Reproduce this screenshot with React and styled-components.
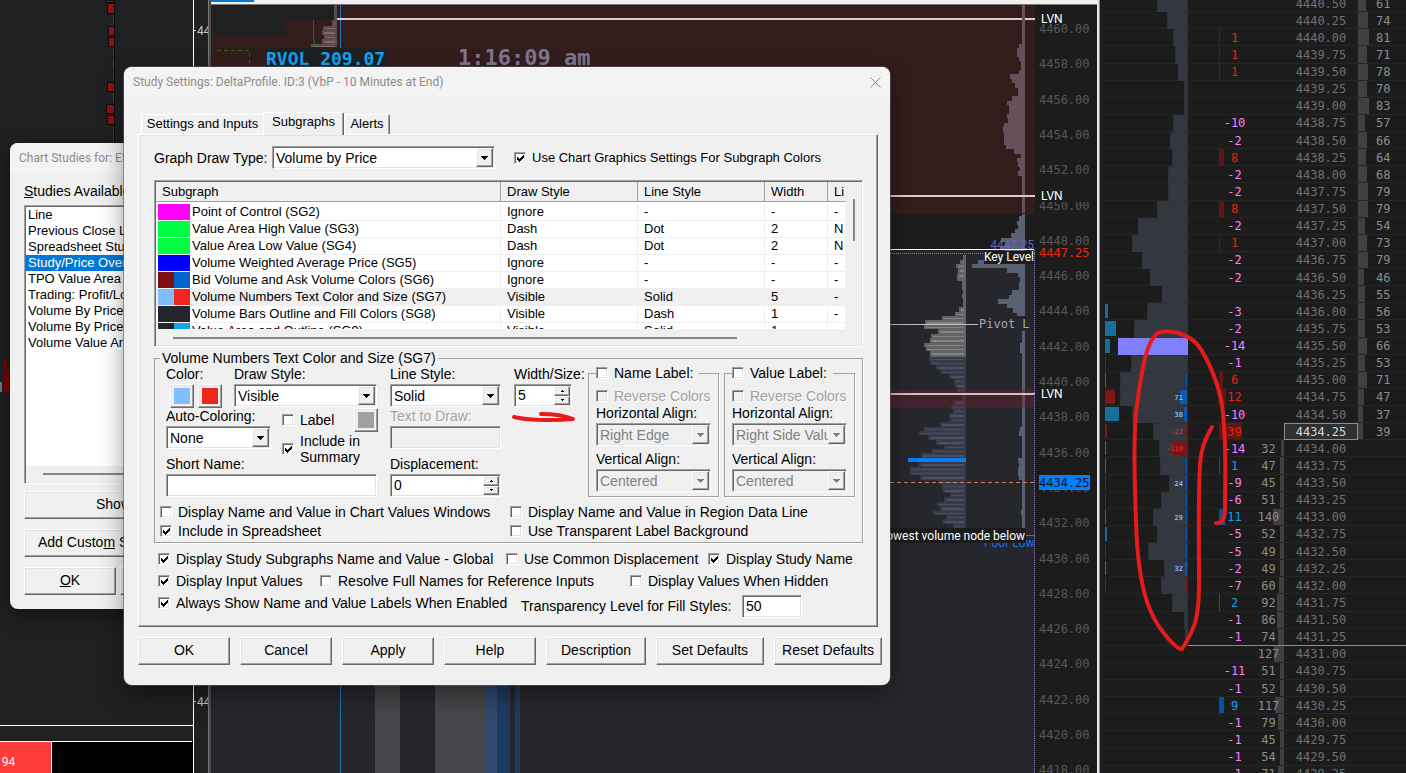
import React from 'react';
import styled, { createGlobalStyle, css } from 'styled-components';

const SANS = '"Liberation Sans", Arial, sans-serif';
const UI = 'Roboto, "Segoe UI", sans-serif';
const MONO = '"DejaVu Sans Mono", Consolas, monospace';

const sunken = css`
  border: 1px solid;
  border-color: #a0a0a0 #fff #fff #a0a0a0;
  box-shadow: inset 1px 1px 0 #696969, inset -1px -1px 0 #e3e3e3;
`;

const raised = css`
  border: 1px solid;
  border-color: #fff #696969 #696969 #fff;
  box-shadow: inset -1px -1px 0 #a0a0a0, inset 1px 1px 0 #e3e3e3;
`;

/* ---------- data ---------- */

// price, volume bar, delta, bid, ask, footprint delta, footprint bar, imbalance bar
const LADDER = [
  ['4440.50', 31, null, null, 61],
  ['4440.25', 21, null, null, 74],
  ['4440.00', 15, 1, null, 81],
  ['4439.75', 13, 1, null, 71],
  ['4439.50', 10, 1, null, 78],
  ['4439.25', 4, null, null, 70],
  ['4439.00', 4, null, null, 83],
  ['4438.75', 15, -10, null, 57],
  ['4438.50', 18, -2, null, 66],
  ['4438.25', 16, 8, null, 64],
  ['4438.00', 20, -2, null, 68],
  ['4437.75', 20, -2, null, 79],
  ['4437.50', 31, 8, null, 79],
  ['4437.25', 50, -2, null, 54],
  ['4437.00', 56, 1, null, 73],
  ['4436.75', 46, -2, null, 79],
  ['4436.50', 38, -2, null, 46],
  ['4436.25', 26, null, null, 55],
  ['4436.00', 41, -3, null, 56, null, 0, 3],
  ['4435.75', 54, -2, null, 53, null, 0, 11],
  ['4435.50', 70, -14, null, 66, null, 0, 5],
  ['4435.25', 57, -1, null, 53, null, 0, -1],
  ['4435.00', 68, 6, null, 71, null, 1, 1],
  ['4434.75', 68, 12, null, 47, 71, 7, -10],
  ['4434.50', 56, -10, null, 37, 38, 3, 14],
  ['4434.25', 35, 39, null, 39, -22, -1, -2],
  ['4434.00', 29, -14, 32, null, -119, -15, 1],
  ['4433.75', 28, 1, 47, null, null, 1, 1],
  ['4433.50', 19, -9, 45, null, 24, 1, -1],
  ['4433.25', 27, -6, 51, null, null, 1, -1],
  ['4433.00', 35, 11, 140, null, 29, 1, 1],
  ['4432.75', 31, -5, 52, null, null, 1, 2],
  ['4432.50', 40, -5, 49, null, null, 1, -1],
  ['4432.25', 24, -2, 49, null, 32, 2, 1],
  ['4432.00', 27, -7, 60, null, null, -1, -1],
  ['4431.75', 16, 2, 92, null],
  ['4431.50', 4, -1, 86, null],
  ['4431.25', 3, -1, 74, null],
  ['4431.00', 0, null, 127, null],
  ['4430.75', 0, -11, 51, null],
  ['4430.50', 0, -1, 52, null],
  ['4430.25', 0, 9, 117, null],
  ['4430.00', 0, -1, 79, null],
  ['4429.75', 0, -1, 45, null],
  ['4429.50', 0, -1, 54, null],
  ['4429.25', 0, -1, 71, null],
];

const DELTA_BARS = { 1: 1, 2: 1, 6: 4, 8: 5, 9: 5, 11: 6, 12: 7, 39: 23 };
const CURRENT = '4434.25';
const POC = '4435.50';

const SUBGRAPHS = [
  { colors: ['#ff00ff'], name: 'Point of Control (SG2)', draw: 'Ignore', line: '-', width: '-', label: '-' },
  { colors: ['#00ff40'], name: 'Value Area High Value (SG3)', draw: 'Dash', line: 'Dot', width: '2', label: 'N' },
  { colors: ['#00ff40'], name: 'Value Area Low Value (SG4)', draw: 'Dash', line: 'Dot', width: '2', label: 'N' },
  { colors: ['#0000ff'], name: 'Volume Weighted Average Price (SG5)', draw: 'Ignore', line: '-', width: '-', label: '-' },
  { colors: ['#800f0f', '#0064cc'], name: 'Bid Volume and Ask Volume Colors (SG6)', draw: 'Ignore', line: '-', width: '-', label: '-' },
  { colors: ['#80bfff', '#f0261c'], name: 'Volume Numbers Text Color and Size (SG7)', draw: 'Visible', line: 'Solid', width: '5', label: '-', selected: true },
  { colors: ['#242630'], name: 'Volume Bars Outline and Fill Colors (SG8)', draw: 'Visible', line: 'Dash', width: '1', label: '-' },
  { colors: ['#242424', '#12a4f0'], name: 'Value Area and Outline (SG9)', draw: 'Visible', line: 'Solid', width: '1', label: '' },
];

const STUDIES = [
  'Line',
  'Previous Close Line',
  'Spreadsheet Study',
  'Study/Price Overlay',
  'TPO Value Area',
  'Trading: Profit/Loss',
  'Volume By Price',
  'Volume By Price',
  'Volume Value Area',
];

// [top, left] steps of each volume profile
const UPPER_PROFILE = [
  [5, 1022], [44, 1019], [48, 1017], [57, 1019], [61, 1021], [70, 1019], [74, 1010], [79, 1012],
  [83, 1015], [88, 1018], [96, 1012], [101, 1007], [105, 1009], [114, 1007], [118, 1008], [123, 1004],
  [127, 1003], [132, 1004], [145, 1006], [149, 1014], [154, 1021], [158, 1017], [162, 1018],
  [167, 1020], [171, 1018], [176, 1022],
];
const MIDDLE_PROFILE = [
  [214, 1022], [216, 1019], [221, 1017], [225, 1018], [229, 1015], [233, 1011], [238, 1001],
  [242, 1005], [246, 1000], [250, 1005], [260, 978], [264, 972], [268, 1007], [273, 1018],
  [277, 1020], [282, 1019], [290, 1012], [295, 1009], [299, 998], [304, 1007], [308, 1013], [313, 1017],
];
const LOWER_PROFILE = [
  [331, 1022], [343, 1020], [353, 1022], [427, 1020], [431, 1019], [436, 1022], [458, 1018],
  [463, 1019], [467, 1018], [476, 1019], [480, 1022], [510, 1021], [515, 1022],
];
const GREY_PROFILE = [
  [255, 963], [260, 960], [264, 956], [268, 958], [273, 957], [281, 962], [285, 962], [290, 963],
  [294, 962], [298, 963], [303, 963], [307, 959], [312, 955], [316, 942], [320, 925], [325, 924],
  [329, 938], [334, 931], [338, 930], [343, 924], [347, 926], [351, 930],
];
const SESSION_PROFILE = [
  [357, 929], [361, 930], [365, 936], [370, 940], [374, 949], [379, 954], [383, 955], [388, 957],
  [392, 962], [396, 962], [400, 953], [405, 951], [409, 953], [413, 949], [418, 950], [422, 940],
  [427, 924], [431, 919], [435, 928], [440, 936], [445, 944], [449, 932], [453, 921], [458, 919],
  [462, 919], [467, 910], [471, 910], [475, 920], [480, 937], [484, 942], [488, 943], [493, 950],
  [497, 944], [502, 937], [506, 940], [511, 933], [515, 946], [519, 943], [524, 953],
];

/* ---------- charts ---------- */

const Profile = ({ rows, right, bottom, fill, stripe }) => (
  <g>
    {rows.map(([top, left], i) => {
      const end = i + 1 < rows.length ? rows[i + 1][0] : bottom;
      return (
        <React.Fragment key={top}>
          <rect x={left} y={top} width={right - left} height={end - top} fill={fill} />
          {stripe && <rect x={left + 2} y={top + 2} width={Math.max(right - left - 4, 0)} height={end - top > 4 ? 2 : 1} fill={stripe} />}
        </React.Fragment>
      );
    })}
  </g>
);

const LeftChart = () => (
  <ChartSvg viewBox="0 0 209 773" preserveAspectRatio="xMinYMin slice" shapeRendering="crispEdges">
    <rect width="209" height="773" fill="#1e2022" />
    <rect x="114" width="1" height="160" fill="#0c0c0c" />
    {[[0, 105, 2], [3, 107, 10], [26, 108, 9], [37, 108, 9], [82, 107, 9], [104, 106, 9], [115, 107, 9]].map(([y, x, h]) => (
      <rect key={y} x={x} y={y} width={114 - x} height={h} fill="#8f1114" stroke="#0c0c0c" />
    ))}
    {[[15, 9], [48, 9], [70, 10], [126, 20]].map(([y, h]) => (
      <rect key={y} x="113" y={y} width="1" height={h} fill="#8f1114" />
    ))}
    <rect x="113" y="59" width="1" height="9" fill="#10508c" />
    <rect x="113" y="93" width="1" height="9" fill="#10508c" />
    <rect x="4" y="360" width="3" height="10" fill="#7a0000" />
    <rect x="4" y="371" width="8" height="10" fill="#7a0000" />
    <rect x="4" y="382" width="8" height="10" fill="#7a0000" />
    <rect y="382" width="2" height="10" fill="#777" />
    <rect x="193" width="1" height="773" fill="#fff" />
    <rect x="194" y="30" width="2" height="1" fill="#ccc" />
    <rect x="194" y="701" width="2" height="1" fill="#ccc" />
    <AxisText x="197" y="35">44</AxisText>
    <AxisText x="197" y="706">44</AxisText>
    <rect y="725" width="193" height="1" fill="#fff" />
    <rect y="742" width="51" height="31" fill="#ff3c3c" />
    <rect x="52" y="742" width="141" height="31" fill="#000" />
    <rect y="741" width="192" height="1" fill="#fff" />
    <rect x="51" y="742" width="1" height="31" fill="#fff" />
    <AxisText x="-5" y="766" $light>194</AxisText>
    <rect x="208" width="1" height="773" fill="#777" />
  </ChartSvg>
);

const CenterChart = () => {
  const prices = Array.from({ length: 22 }, (_, i) => 4460 - i * 2);
  return (
    <ChartSvg viewBox="211 5 886 768" preserveAspectRatio="xMaxYMin slice" shapeRendering="crispEdges">
      <rect x="211" y="5" width="886" height="768" fill="#26262d" />
      <rect x="211" y="5" width="824" height="209" fill="#331c1c" />
      <rect x="890" y="214" width="145" height="35" fill="#1c1c1c" />
      <rect x="213" y="5" width="122" height="15" fill="#1e2022" />
      <rect x="213" y="20" width="73" height="15" fill="#1e2022" />
      <rect x="1035" y="5" width="62" height="768" fill="#1c1c1c" />

      <Profile rows={[[5, 334], [20, 332], [26, 323], [30, 322], [35, 324], [39, 322], [44, 311]]} right={337} bottom={47} fill="#5e4a4c" stripe="#7d686b" />
      <path d="M313 20v15l2 12" fill="none" stroke="#1e6e0c" />
      <path d="M217 50h32v20" fill="none" stroke="#1e6e0c" strokeDasharray="4 3" />
      <rect x="340" y="5" width="1" height="768" fill="#1e78b4" />
      <rect x="337" y="18" width="698" height="2" fill="#e2c9c7" />
      <rect x="265" y="48" width="123" height="24" fill="#1e2022" />
      <BigText x="266" y="65" fill="#12a4f0" $size={18}>RVOL 209.07</BigText>
      <BigText x="458" y="65" fill="#7f7592" $size={22}>1:16:09 am</BigText>

      <rect x="375" y="680" width="25" height="93" fill="#47474b" />
      <rect x="435" y="680" width="50" height="93" fill="#47474b" />
      <rect x="485" y="680" width="12" height="93" fill="#2e4a6e" />
      <rect x="497" y="680" width="13" height="93" fill="#1f3a60" />
      <rect x="515" y="680" width="5" height="93" fill="#1f3a60" />

      <Profile rows={UPPER_PROFILE} right={1025} bottom={213} fill="#66505a" />
      <Profile rows={MIDDLE_PROFILE} right={1025} bottom={316} fill="#586172" />
      <Profile rows={LOWER_PROFILE} right={1025} bottom={528} fill="#586172" />
      <Profile rows={GREY_PROFILE} right={966} bottom={357} fill="#636365" stripe="#858587" />
      <Profile rows={SESSION_PROFILE} right={966} bottom={528} fill="#373b49" stripe="#4a5061" />
      <rect x="890" y="390" width="145" height="18" fill="#702430" fillOpacity="0.4" />
      <rect x="890" y="195" width="145" height="2" fill="#e2c9c7" />
      <rect x="890" y="393" width="145" height="2" fill="#d8bcc0" />
      <rect x="908" y="458" width="58" height="4" fill="#0a7cf5" />
      <path d="M890 482.5H1035" stroke="#e0784a" strokeDasharray="4 3" />
      <path d="M890 253.5H1035" stroke="#8a80b8" strokeDasharray="1 1" />
      <path d="M1034.5 250V773" stroke="#8a80b8" strokeDasharray="1 1" />
      <AxisText x="1034" y="249" textAnchor="end" $blue>4447.25</AxisText>
      <rect x="890" y="249" width="144" height="1" fill="#fff" />
      <rect x="984" y="251" width="50" height="13" fill="#1c1c1c" />
      <TagText x="1034" y="261" textAnchor="end">Key Level</TagText>
      <rect x="890" y="324" width="88" height="1" fill="#c0c0c0" />
      <MonoText x="979" y="328" fill="#a8a8a8">Pivot L</MonoText>
      <rect x="1025" y="535" width="10" height="1" fill="#1e6ef0" />
      <TagText x="984" y="547" $blue>Poor Low</TagText>
      <rect x="880" y="528" width="146" height="15" fill="#1c1c1c" />
      <TagText x="1025" y="540" textAnchor="end">owest volume node below</TagText>

      {prices.map((price, i) => (
        <MonoText key={price} x="1039" y={Math.round(33 + i * 35.3)} fill="#585858">{price.toFixed(2)}</MonoText>
      ))}
      <rect x="1036" y="12" width="55" height="12" fill="#1c1c1c" />
      <rect x="1036" y="189" width="55" height="13" fill="#1c1c1c" />
      <TagText x="1041" y="23">LVN</TagText>
      <TagText x="1041" y="200">LVN</TagText>
      <TagText x="1041" y="398">LVN</TagText>
      <MonoText x="1039" y="257" fill="#f0260c">4447.25</MonoText>
      <rect x="1039" y="475" width="51" height="15" fill="#0080ff" />
      <MonoText x="1039" y="487" fill="#0c1016">4434.25</MonoText>
    </ChartSvg>
  );
};

/* ---------- price ladder ---------- */

const deltaColor = (delta, isBuy) => {
  if (delta < 0) return '#f97fff';
  return isBuy ? '#12a0e8' : '#e6240e';
};

const Ladder = () => (
  <LadderPane>
    <LadderTable>
      <colgroup>
        <col style={{ width: 88 }} />
        <col style={{ width: 65 }} />
        <col style={{ width: 31 }} />
        <col style={{ width: 74 }} />
        <col />
      </colgroup>
      <tbody>
        {LADDER.map(([price, volume, delta, bid, ask, foot, footBar = 0, imbalance = 0]) => {
          const isBuy = price < CURRENT;
          return (
            <LadderRow key={price} $marked={price === '4431.25'}>
              <td>
                <Imbalance $sell={imbalance < 0} style={{ width: Math.abs(imbalance) }} />
                {volume > 0 && (
                  <VolumeBar $poc={price === POC} style={{ width: volume }}>
                    {foot && <FootText $sell={foot < 0}>{foot}</FootText>}
                    <FootBar $sell={footBar < 0} style={{ width: Math.abs(footBar) }} />
                  </VolumeBar>
                )}
              </td>
              <DeltaCell $color={deltaColor(delta, isBuy)}>
                {delta > 0 && <DeltaBar $buy={isBuy} style={{ width: DELTA_BARS[delta] }} />}
                <span>{delta}</span>
              </DeltaCell>
              <BidCell>
                {bid && <BidBar style={{ width: Math.round(bid * 0.08) }} />}
                <span>{bid}</span>
              </BidCell>
              <PriceCell $current={price === CURRENT}>{price}</PriceCell>
              <AskCell>
                {ask && <AskBar style={{ width: Math.round(ask * 0.13) }} />}
                <span>{ask}</span>
              </AskCell>
            </LadderRow>
          );
        })}
      </tbody>
    </LadderTable>
    <Marker viewBox="1099 0 307 773" preserveAspectRatio="xMaxYMin slice">
      <path d="M1212 427C1204 441 1201 450 1200 464C1198 500 1199 540 1199 585C1199 620 1194 630 1182 649C1178 651 1160 632 1151 612C1141 590 1137 560 1136 520C1134 470 1134 425 1137 405C1141 375 1146 340 1158 333C1172 329 1187 334 1197 344C1208 358 1219 385 1222 405C1227 440 1225 480 1225 510C1224 522 1222 523 1216 523" />
    </Marker>
  </LadderPane>
);

/* ---------- form parts ---------- */

const CheckBox = ({ label, checked, disabled }) => (
  <CheckLabel $disabled={disabled}>
    <CheckSquare>
      <input type="checkbox" defaultChecked={checked} disabled={disabled} />
      <svg viewBox="0 0 12 12" width="12" height="12" shapeRendering="crispEdges">
        <path d="M3 5h1v1h1v1h1v-1h1v-1h1v-1h1v-1h1v3h-1v1h-1v1h-1v1h-1v1h-1v-1h-1v-1h-1z" />
      </svg>
    </CheckSquare>
    <span>{label}</span>
  </CheckLabel>
);

const Dropdown = ({ id, value, disabled }) => (
  <SelectBox $disabled={disabled}>
    <select id={id} defaultValue={value} disabled={disabled}>
      <option>{value}</option>
    </select>
    <Arrow aria-hidden="true">
      <svg viewBox="0 0 7 4" width="7" height="4" shapeRendering="crispEdges">
        <path d="M0 0h7v1h-1v1h-1v1h-1v1h-1v-1h-1v-1h-1v-1h-1z" fill="currentColor" />
      </svg>
    </Arrow>
  </SelectBox>
);

const Spinner = ({ id, value }) => (
  <SpinBox>
    <input id={id} type="text" defaultValue={value} />
    <SpinButtons>
      <button type="button" aria-label="Increase">
        <svg viewBox="0 0 3 2" width="3" height="2" shapeRendering="crispEdges"><path d="M1 0h1v1h1v1h-3v-1h1z" /></svg>
      </button>
      <button type="button" aria-label="Decrease">
        <svg viewBox="0 0 3 2" width="3" height="2" shapeRendering="crispEdges"><path d="M0 0h3v1h-1v1h-1v-1h-1z" /></svg>
      </button>
    </SpinButtons>
  </SpinBox>
);

const LabelGroup = ({ title, horizontal, id }) => (
  <Group $inner>
    <legend><CheckBox label={title} /></legend>
    <ReverseRow><CheckBox label="Reverse Colors" disabled /></ReverseRow>
    <FieldLabel htmlFor={`${id}-h`}>Horizontal Align:</FieldLabel>
    <Dropdown id={`${id}-h`} value={horizontal} disabled />
    <FieldLabel htmlFor={`${id}-v`} $gap={4}>Vertical Align:</FieldLabel>
    <Dropdown id={`${id}-v`} value="Centered" disabled />
  </Group>
);

const SubgraphList = () => (
  <ListFrame>
    <ListView>
      <ListTable>
        <colgroup>
          <col style={{ width: 345 }} />
          <col style={{ width: 137 }} />
          <col style={{ width: 127 }} />
          <col style={{ width: 63 }} />
          <col />
        </colgroup>
        <thead>
          <tr>
            <th>Subgraph</th>
            <th>Draw Style</th>
            <th>Line Style</th>
            <th>Width</th>
            <th>Li</th>
          </tr>
        </thead>
        <tbody>
          {SUBGRAPHS.map((item) => (
            <ListRow key={item.name} $selected={item.selected}>
              <td>
                <NameCell>
                  <Swatch>
                    {item.colors.map((color) => <SwatchPart key={color} $color={color} />)}
                  </Swatch>
                  {item.name}
                </NameCell>
              </td>
              <td>{item.draw}</td>
              <td>{item.line}</td>
              <td>{item.width}</td>
              <td>{item.label}</td>
            </ListRow>
          ))}
        </tbody>
      </ListTable>
    </ListView>
    <VScroll><span /></VScroll>
    <HScroll><span /></HScroll>
  </ListFrame>
);

const StudySettings = () => (
  <Dialog>
    <TitleBar>
      <span>Study Settings: DeltaProfile. ID:3 (VbP - 10 Minutes at End)</span>
      <CloseButton type="button" aria-label="Close">
        <svg viewBox="0 0 11 11" width="11" height="11"><path d="M0.5 0.5l10 10M10.5 0.5l-10 10" stroke="#8c8c8c" fill="none" /></svg>
      </CloseButton>
    </TitleBar>
    <DialogBody>
      <Tabs role="tablist">
        <Tab type="button" role="tab" $width={122}>Settings and Inputs</Tab>
        <Tab type="button" role="tab" aria-selected="true" $active $width={81}>Subgraphs</Tab>
        <Tab type="button" role="tab" $last $width={46}>Alerts</Tab>
      </Tabs>
      <Panel>
        <TopRow>
          <label htmlFor="graph-type">Graph Draw Type:</label>
          <Dropdown id="graph-type" value="Volume by Price" />
          <CheckBox label="Use Chart Graphics Settings For Subgraph Colors" checked />
        </TopRow>
        <SubgraphList />
        <Group>
          <legend>Volume Numbers Text Color and Size (SG7)</legend>
          <Columns>
            <Column>
              <Split>
                <FieldLabel as="span">Color:</FieldLabel>
                <FieldLabel htmlFor="draw-style">Draw Style:</FieldLabel>
                <ColorPair>
                  <ColorButton type="button" aria-label="Primary color" $color="#80bfff" />
                  <ColorButton type="button" aria-label="Secondary color" $color="#f0261c" />
                </ColorPair>
                <Dropdown id="draw-style" value="Visible" />
              </Split>
              <AutoSplit>
                <div>
                  <FieldLabel htmlFor="auto-color">Auto-Coloring:</FieldLabel>
                  <Dropdown id="auto-color" value="None" />
                </div>
                <LabelOptions>
                  <LabelLine>
                    <CheckBox label="Label" />
                    <ColorButton type="button" aria-label="Label color" $color="#a0a0a0" />
                  </LabelLine>
                  <CheckBox label={<>Include in<br />Summary</>} checked />
                </LabelOptions>
              </AutoSplit>
              <FieldLabel htmlFor="short-name" $gap={6}>Short Name:</FieldLabel>
              <TextInput id="short-name" type="text" />
            </Column>
            <Column>
              <FieldLabel htmlFor="line-style">Line Style:</FieldLabel>
              <Dropdown id="line-style" value="Solid" />
              <FieldLabel htmlFor="draw-text" $disabled>Text to Draw:</FieldLabel>
              <TextInput id="draw-text" type="text" disabled />
              <FieldLabel htmlFor="displacement" $gap={6}>Displacement:</FieldLabel>
              <Spinner id="displacement" value="0" />
            </Column>
            <Column>
              <FieldLabel htmlFor="width-size">Width/Size:</FieldLabel>
              <Spinner id="width-size" value="5" />
              <Underline viewBox="0 0 66 14" width="66" height="14">
                <path d="M3 7C15 10 40 11 62 9C52 5 42 4 30 4" />
              </Underline>
            </Column>
            <LabelGroup id="name-label" title="Name Label:" horizontal="Right Edge" />
            <LabelGroup id="value-label" title="Value Label:" horizontal="Right Side Valu" />
          </Columns>
          <GroupChecks>
            <CheckBox label="Display Name and Value in Chart Values Windows" />
            <CheckBox label="Display Name and Value in Region Data Line" />
            <CheckBox label="Include in Spreadsheet" checked />
            <CheckBox label="Use Transparent Label Background" />
          </GroupChecks>
        </Group>
        <OptionRow $cols="348px 202px 1fr">
          <CheckBox label="Display Study Subgraphs Name and Value - Global" checked />
          <CheckBox label="Use Common Displacement" />
          <CheckBox label="Display Study Name" checked />
        </OptionRow>
        <OptionRow $cols="162px 310px 1fr">
          <CheckBox label="Display Input Values" checked />
          <CheckBox label="Resolve Full Names for Reference Inputs" />
          <CheckBox label="Display Values When Hidden" />
        </OptionRow>
        <LastRow $cols="363px 221px 60px">
          <CheckBox label="Always Show Name and Value Labels When Enabled" checked />
          <TransparencyLabel htmlFor="transparency">Transparency Level for Fill Styles:</TransparencyLabel>
          <TextInput id="transparency" type="text" defaultValue="50" />
        </LastRow>
      </Panel>
      <ButtonRow>
        <PushButton type="button" $width={92}>OK</PushButton>
        <PushButton type="button" $width={92}>Cancel</PushButton>
        <PushButton type="button" $width={92}>Apply</PushButton>
        <PushButton type="button" $width={92}>Help</PushButton>
        <PushButton type="button" $width={100}>Description</PushButton>
        <PushButton type="button" $width={108}>Set Defaults</PushButton>
        <PushButton type="button" $width={108}>Reset Defaults</PushButton>
      </ButtonRow>
    </DialogBody>
  </Dialog>
);

const ChartStudies = () => (
  <StudiesWindow>
    <TitleBar><span>Chart Studies for: ES</span></TitleBar>
    <StudiesBody>
      <StudiesLabel><u>S</u>tudies Available</StudiesLabel>
      <StudyList role="listbox">
        {STUDIES.map((study, i) => (
          <StudyItem key={i} role="option" $selected={i === 3}>{study}</StudyItem>
        ))}
        <StudyScroll />
      </StudyList>
      <WideButton type="button" $indent={71}>Show</WideButton>
      <WideButton type="button" $indent={13}>Add Custo<u>m</u> Study</WideButton>
      <StudyButtons>
        <PushButton type="button" $width={92}><u>O</u>K</PushButton>
        <PushButton type="button" $width={92} aria-label="Cancel" />
      </StudyButtons>
    </StudiesBody>
  </StudiesWindow>
);

const App = () => (
  <>
    <GlobalStyle />
    <Desktop>
      <LeftPane><LeftChart /></LeftPane>
      <CenterPane>
        <TabStrip><span /></TabStrip>
        <CenterChart />
      </CenterPane>
      <Ladder />
      <ChartStudies />
      <StudySettings />
    </Desktop>
  </>
);

/* ---------- styles ---------- */

const GlobalStyle = createGlobalStyle`
  * {
    box-sizing: border-box;
  }

  body {
    margin: 0;
    background: #1c1c1c;
    color: #000;
    font-family: ${SANS};
    font-size: 14px;
    line-height: 16px;
  }

  button, input, select {
    font: inherit;
    color: inherit;
    margin: 0;
  }
`;

const Desktop = styled.main`
  position: relative;
  display: flex;
  height: 100vh;
  overflow: hidden;
`;

const LeftPane = styled.section`
  flex: 0 0 209px;
`;

const CenterPane = styled.section`
  flex: 1;
  min-width: 0;
  display: flex;
  flex-direction: column;
  border-left: 2px solid #4a4a4a;
  border-right: 2px solid #e4e4ea;
`;

const TabStrip = styled.div`
  flex: 0 0 5px;
  background: #f0f0f0;
  border-bottom: 1px solid #777;

  span {
    display: block;
    width: 43px;
    height: 2px;
    background: #0078d7;
  }
`;

const ChartSvg = styled.svg`
  display: block;
  width: 100%;
  height: 100%;
  flex: 1;
  min-height: 0;
`;

const AxisText = styled.text`
  font-family: ${UI};
  font-size: 12px;
  fill: ${(p) => (p.$light ? '#fff' : p.$blue ? '#6464b4' : '#c8c8c8')};
`;

const BigText = styled.text`
  font-family: ${MONO};
  font-weight: bold;
  font-size: ${(p) => p.$size}px;
`;

const MonoText = styled.text`
  font-family: ${MONO};
  font-size: 12px;
`;

const TagText = styled.text`
  font-family: ${UI};
  font-size: 12px;
  fill: ${(p) => (p.$blue ? '#1e6ef0' : '#fff')};
`;

const LadderPane = styled.section`
  position: relative;
  flex: 0 0 307px;
  overflow: hidden;
  background: #1c1c1c;
  border-left: 1px solid #8a8a8a;
`;

const LadderTable = styled.table`
  table-layout: fixed;
  width: 100%;
  height: calc(100% + 15px);
  margin-top: -5px;
  border-collapse: separate;
  border-spacing: 0;
  font-family: ${MONO};
  font-size: 12px;
  line-height: 14px;
  color: #8c8c8c;

  td {
    position: relative;
    padding: 1px 0 0;
    border-bottom: 1px solid #262626;
  }
`;

const LadderRow = styled.tr`
  ${(p) => p.$marked && css`
    td + td {
      border-bottom-color: #8c8c8c;
    }
  `}
`;

const Imbalance = styled.i`
  position: absolute;
  left: 5px;
  top: 1px;
  bottom: 1px;
  background: ${(p) => (p.$sell ? '#801818' : '#16709e')};
`;

const VolumeBar = styled.div`
  position: absolute;
  right: 0;
  top: 0;
  bottom: -1px;
  display: flex;
  align-items: center;
  justify-content: flex-end;
  background: ${(p) => (p.$poc ? '#8080ff' : '#333740')};
  border: solid #2e323b;
  border-width: ${(p) => (p.$poc ? '0' : '1px 1px 0 1px')};
`;

const FootBar = styled.i`
  align-self: stretch;
  margin: 0 0 2px;
  background: ${(p) => (p.$sell ? '#7c1416' : '#0c58b0')};
`;

const FootText = styled.span`
  position: absolute;
  right: 4px;
  z-index: 1;
  font-size: 7px;
  line-height: 10px;
  font-weight: bold;
  color: ${(p) => (p.$sell ? '#c42c2c' : '#7cb4f4')};
`;

const DeltaCell = styled.td`
  color: ${(p) => p.$color};
  text-align: center;

  span {
    position: relative;
    padding-left: 28px;
  }
`;

const DeltaBar = styled.i`
  position: absolute;
  left: 31px;
  top: 0;
  bottom: 0;
  background: ${(p) => (p.$buy ? '#0850a0' : '#641414')};
`;

const BidCell = styled.td`
  text-align: center;

  span {
    position: relative;
  }
`;

const BidBar = styled.i`
  position: absolute;
  right: 0;
  top: 0;
  bottom: 0;
  background: #404044;
`;

const PriceCell = styled.td`
  text-align: center;
  color: ${(p) => (p.$current ? '#d8d8d8' : '#707070')};
  ${(p) => p.$current && css`
    background: #303030;
    outline: 1px solid #8c8c8c;
    outline-offset: -1px;
  `}
`;

const AskCell = styled.td`
  span {
    display: block;
    margin-left: 18px;
  }
`;

const AskBar = styled.i`
  position: absolute;
  left: 0;
  top: 0;
  bottom: 0;
  background: #404044;
`;

const Marker = styled.svg`
  position: absolute;
  inset: 0;
  width: 100%;
  height: 100%;
  pointer-events: none;

  path {
    fill: none;
    stroke: #e61c1c;
    stroke-width: 4;
    stroke-linecap: round;
    stroke-linejoin: round;
  }
`;

const Window = styled.section`
  position: absolute;
  border-radius: 8px;
  background: #f0f0f0;
  overflow: hidden;
`;

const Dialog = styled(Window)`
  left: 124px;
  top: 67px;
  width: 766px;
  box-shadow: 0 0 0 1px rgba(90, 90, 90, 0.6), 0 10px 24px rgba(0, 0, 0, 0.4);
`;

const StudiesWindow = styled(Window)`
  left: 10px;
  top: 143px;
  width: 300px;
  font-size: 13px;
  box-shadow: 0 6px 20px rgba(0, 0, 0, 0.4);
`;

const TitleBar = styled.header`
  display: flex;
  align-items: center;
  justify-content: space-between;
  height: 30px;
  padding: 0 9px;
  background: #f3f3f3;
  color: #8c8c8c;
  font-family: ${UI};
  font-size: 12px;
`;

const CloseButton = styled.button`
  display: flex;
  padding: 0;
  border: 0;
  background: none;
`;

const DialogBody = styled.div`
  padding: 15px 8px 20px 14px;
`;

const Tabs = styled.div`
  display: flex;
  align-items: flex-end;
  height: 22px;
  padding-left: 3px;
  font-size: 13px;
`;

const Tab = styled.button`
  flex: 0 0 ${(p) => p.$width}px;
  height: ${(p) => (p.$active ? 23 : 20)}px;
  margin-bottom: ${(p) => (p.$active ? -1 : 0)}px;
  padding: 0 0 ${(p) => (p.$active ? 4 : 1)}px;
  white-space: nowrap;
  background: #f0f0f0;
  border: solid #fff;
  border-width: 1px 0 0 1px;
  border-radius: 2px 2px 0 0;
  position: relative;
  ${(p) => (p.$active || p.$last) && css`
    border-right: 1px solid #696969;
    box-shadow: inset -1px 0 0 #a0a0a0;
  `}
`;

const Panel = styled.div`
  ${raised}
  margin-right: 4px;
  padding: 11px 14px 8px 15px;
`;

const CheckLabel = styled.label`
  display: inline-flex;
  align-items: center;
  gap: 6px;
  white-space: nowrap;
  ${(p) => p.$disabled && css`
    color: #a0a0a0;
    text-shadow: 1px 1px 0 #fff;
  `}
`;

const CheckSquare = styled.span`
  position: relative;
  flex: 0 0 12px;
  height: 12px;

  input {
    ${sunken}
    appearance: none;
    display: block;
    width: 12px;
    height: 12px;
    background: #fff;
  }

  input:disabled {
    background: #f0f0f0;
  }

  svg {
    position: absolute;
    inset: 0;
    display: none;
    pointer-events: none;
  }

  input:checked + svg {
    display: block;
  }
`;

const SelectBox = styled.div`
  ${sunken}
  position: relative;
  height: 23px;
  background: ${(p) => (p.$disabled ? '#f0f0f0' : '#fff')};
  color: ${(p) => (p.$disabled ? '#808080' : '#000')};

  select {
    appearance: none;
    display: block;
    width: 100%;
    height: 21px;
    padding: 0 16px 0 3px;
    border: 0;
    outline: 0;
    background: none;
    opacity: 1;
    color: inherit;
  }
`;

const Arrow = styled.span`
  ${raised}
  position: absolute;
  right: 1px;
  top: 1px;
  bottom: 1px;
  width: 17px;
  display: flex;
  align-items: center;
  justify-content: center;
  background: #f0f0f0;
  pointer-events: none;
`;

const TextInput = styled.input`
  ${sunken}
  display: block;
  width: 100%;
  height: 23px;
  padding: 0 3px 2px 3px;
  background: #fff;
  outline: 0;

  &:disabled {
    background: #f0f0f0;
  }
`;

const SpinBox = styled.div`
  ${sunken}
  display: flex;
  height: 23px;
  padding: 1px;
  background: #fff;

  input {
    flex: 1;
    min-width: 0;
    padding: 0 0 1px 2px;
    border: 0;
    outline: 0;
    background: none;
  }
`;

const SpinButtons = styled.div`
  display: flex;
  flex-direction: column;
  width: 16px;

  button {
    ${raised}
    flex: 1;
    min-height: 0;
    display: flex;
    align-items: center;
    justify-content: center;
    padding: 0;
    background: #f0f0f0;
  }
`;

const TopRow = styled.div`
  display: grid;
  grid-template-columns: 118px 223px 1fr;
  align-items: center;

  > :last-child {
    margin-left: 19px;
    font-size: 13px;
  }
`;

const ListFrame = styled.div`
  ${sunken}
  display: grid;
  grid-template-columns: 1fr 15px;
  grid-template-rows: 147px 16px;
  margin-top: 11px;
  padding: 1px;
  font-size: 13px;
`;

const ListView = styled.div`
  overflow: hidden;
  background: #fff;
`;

const ListTable = styled.table`
  table-layout: fixed;
  width: 100%;
  border-collapse: separate;
  border-spacing: 0;

  th {
    height: 20px;
    padding: 0 0 0 6px;
    text-align: left;
    font-weight: normal;
    white-space: nowrap;
    overflow: hidden;
    background: #f0f0f0;
    border-right: 1px solid #a0a0a0;
    border-bottom: 1px solid #a0a0a0;
  }

  th:last-child {
    border-right: 0;
  }

  tbody::before {
    content: '';
    display: block;
    height: 2px;
  }

  td {
    height: 17px;
    padding: 0 0 0 6px;
    line-height: 16px;
    white-space: nowrap;
    overflow: hidden;
    border-right: 1px solid #f0f0f0;
    border-bottom: 1px solid #f0f0f0;
  }

  td:first-child {
    padding-left: 2px;
  }
`;

const ListRow = styled.tr`
  background: ${(p) => (p.$selected ? '#f0f0f0' : '#fff')};
`;

const NameCell = styled.div`
  display: flex;
  gap: 2px;
`;

const Swatch = styled.span`
  display: flex;
  flex: 0 0 32px;
  height: 16px;
`;

const SwatchPart = styled.i`
  flex: 1;
  background: ${(p) => p.$color};
`;

const VScroll = styled.div`
  padding: 17px 0 0 7px;

  span {
    display: block;
    width: 2px;
    height: 42px;
    background: #858585;
  }
`;

const HScroll = styled.div`
  padding: 8px 109px 0 17px;

  span {
    display: block;
    height: 2px;
    background: #858585;
  }
`;

const Group = styled.fieldset`
  min-width: 0;
  margin: ${(p) => (p.$inner ? '1px 0 0' : '4px 0 0')};
  padding: ${(p) => (p.$inner ? '0 7px 1px' : '0 7px 2px 5px')};
  border: 1px solid #a0a0a0;
  box-shadow: 1px 1px 0 #fff;

  > legend {
    padding: 0 2px;
    line-height: 14px;
    ${(p) => p.$inner && css`
      padding: 0 6px 0 0;
    `}
  }

  > legend label {
    line-height: 14px;
  }
`;

const Columns = styled.div`
  display: grid;
  grid-template-columns: 211px 111px 58px 131px 131px;
  column-gap: 13px;
  padding-left: 6px;

  > :nth-child(4) {
    margin-left: 3px;
    margin-right: -3px;
  }

  > :nth-child(5) {
    margin-left: -5px;
    margin-right: 5px;
  }
`;

const Column = styled.div`
  min-width: 0;
`;

const FieldLabel = styled.label`
  display: block;
  line-height: 19px;
  white-space: nowrap;
  margin-top: ${(p) => p.$gap || 0}px;
  ${(p) => p.$disabled && css`
    color: #a0a0a0;
    text-shadow: 1px 1px 0 #fff;
  `}
`;

const Split = styled.div`
  display: grid;
  grid-template-columns: 68px 1fr;
  height: 42px;
`;

const ColorPair = styled.div`
  display: flex;
  gap: 4px;
  padding-left: 4px;
`;

const ColorButton = styled.button`
  ${raised}
  width: 24px;
  height: 24px;
  padding: 3px;
  background: ${(p) => p.$color} content-box;
`;

const AutoSplit = styled.div`
  display: grid;
  grid-template-columns: 105px 1fr;
  column-gap: 11px;
  height: 42px;
`;

const LabelOptions = styled.div`
  display: flex;
  flex-direction: column;
  align-items: flex-start;
`;

const LabelLine = styled.div`
  display: flex;
  justify-content: space-between;
  align-items: center;
  width: 96px;
  height: 26px;
`;

const Underline = styled.svg`
  display: block;
  margin: 3px 0 0 -3px;

  path {
    fill: none;
    stroke: #e61c1c;
    stroke-width: 4;
    stroke-linecap: round;
    stroke-linejoin: round;
  }
`;

const ReverseRow = styled.div`
  display: flex;
  height: 23px;
  padding-top: 6px;
`;

const GroupChecks = styled.div`
  display: grid;
  grid-template-columns: 350px 1fr;
  grid-auto-rows: 19px;
  align-items: center;
  margin-top: 5px;
`;

const OptionRow = styled.div`
  display: grid;
  grid-template-columns: ${(p) => p.$cols};
  align-items: center;
  min-height: 22px;
  padding-left: 4px;

  fieldset + & {
    margin-top: 5px;
  }
`;

const LastRow = styled(OptionRow)`
  align-items: end;
  height: 26px;

  > :first-child {
    align-self: start;
    padding-top: 3px;
  }
`;

const TransparencyLabel = styled.label`
  line-height: 23px;
`;

const ButtonRow = styled.div`
  display: flex;
  gap: 10px;
  margin-top: 10px;
`;

const PushButton = styled.button`
  ${raised}
  flex: 0 0 ${(p) => p.$width}px;
  height: 28px;
  padding: 0 0 2px;
  font-size: 14px;
  background: #f0f0f0;
  white-space: nowrap;
`;

const StudiesBody = styled.div`
  padding: 10px 14px 14px;
`;

const StudiesLabel = styled.div`
  line-height: 16px;
  margin-bottom: 6px;
  font-size: 14px;
`;

const StudyList = styled.ul`
  ${sunken}
  position: relative;
  height: 279px;
  margin: 0 0 7px;
  padding: 1px;
  list-style: none;
  background: #fff;
`;

const StudyItem = styled.li`
  padding-left: 2px;
  line-height: 16px;
  background: ${(p) => (p.$selected ? '#0078d7' : 'transparent')};
  color: ${(p) => (p.$selected ? '#fff' : '#000')};
`;

const StudyScroll = styled.div`
  position: absolute;
  left: 1px;
  right: 1px;
  bottom: 1px;
  height: 16px;
  background: #f0f0f0;

  &::after {
    content: '';
    display: block;
    margin: 7px 0 0 17px;
    height: 2px;
    background: #858585;
  }
`;

const WideButton = styled.button`
  ${raised}
  display: block;
  width: 100%;
  height: 28px;
  margin-bottom: 10px;
  padding: 0 0 2px ${(p) => p.$indent}px;
  font-size: 14px;
  text-align: left;
  background: #f0f0f0;
`;

const StudyButtons = styled.div`
  display: flex;
  gap: 4px;
`;

export default App;
